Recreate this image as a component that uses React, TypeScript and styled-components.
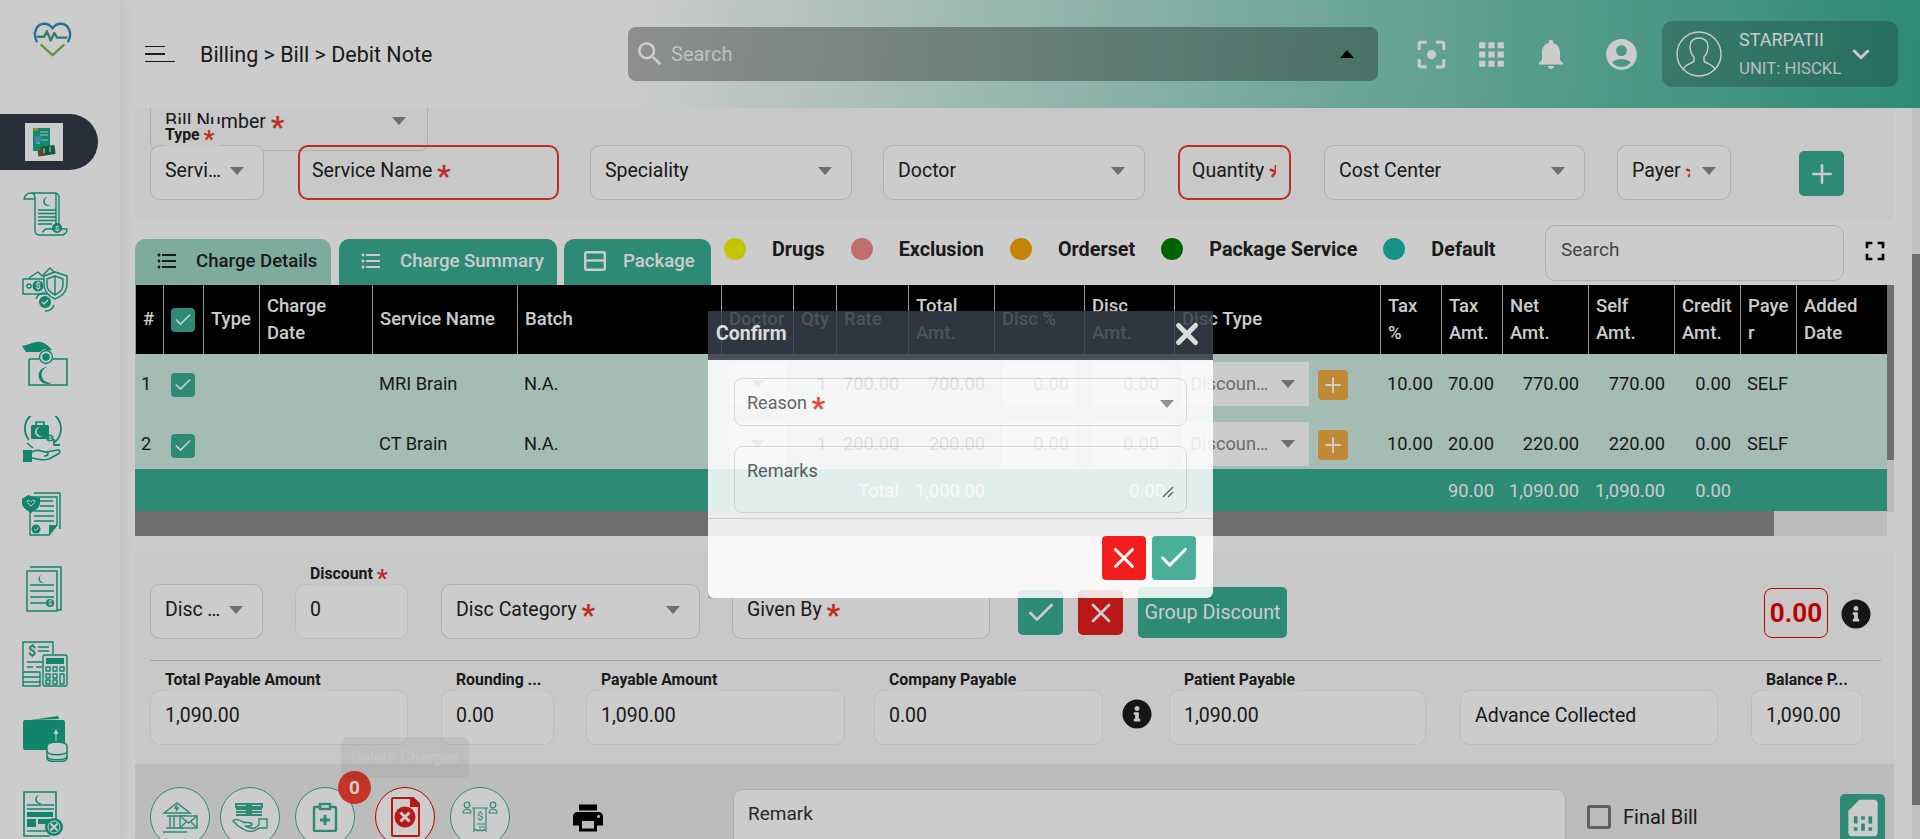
import React from 'react';
import styled, {createGlobalStyle} from 'styled-components';
import {Check, Plus, X} from 'lucide-react';
import {
  MdAccountCircle,
  MdApps,
  MdFilterCenterFocus,
  MdFormatListBulleted,
  MdFullscreen,
  MdKeyboardArrowDown,
  MdNotifications,
  MdPrint,
  MdSearch,
  MdSimCard
} from 'react-icons/md';
import {FaInfoCircle} from 'react-icons/fa';

const TEAL = '#39ae93';
const ICON = '#15a689';
const RED = '#e61e1e';

const GlobalStyle = createGlobalStyle`
  html, body {
    margin: 0;
    height: 100%;
    overflow: hidden;
    background: #fff;
    font-family: Roboto, "Noto Sans", sans-serif;
    color: #222;
  }
  * { box-sizing: border-box; }
`;

const Page = styled.div`
  display: flex;
  height: 839px;
  overflow: hidden;
`;

/* sidebar */
const Sidebar = styled.aside`
  width: 120px;
  flex: none;
  display: flex;
  flex-direction: column;
  background: #fff;
  box-shadow: 4px 0 12px rgba(0, 0, 0, 0.05);
  z-index: 1;
`;

const LogoBox = styled.div`
  height: 108px;
  flex: none;
  padding: 21px 0 0 33px;
`;

const ActivePill = styled.div`
  width: 98px;
  height: 56px;
  margin-top: 6px;
  flex: none;
  padding: 9px 0 0 25px;
  background: #333b49;
  border-radius: 0 28px 28px 0;
`;

const ActiveIconBox = styled.div`
  width: 38px;
  height: 38px;
  background: #fff;
  display: flex;
  align-items: center;
  justify-content: center;
`;

const NavList = styled.nav`
  margin-top: 6px;
  display: flex;
  flex-direction: column;
`;

const NavItem = styled.div`
  height: 75px;
  flex: none;
  display: flex;
  align-items: center;
  padding-left: 22px;
`;

/* top bar */
const Main = styled.div`
  flex: 1;
  min-width: 0;
  display: flex;
  flex-direction: column;
`;

const TopBar = styled.header`
  height: 108px;
  flex: none;
  display: flex;
  align-items: center;
  padding: 0 22px 0 25px;
  background: linear-gradient(93deg, #fff 0%, #fff 28%, #7fccb8 71%, ${TEAL} 100%);
`;

const Burger = styled.div`
  width: 30px;
  flex: none;
  display: flex;
  flex-direction: column;
  gap: 6px;
`;

const BurgerLine = styled.span<{$w: number}>`
  display: block;
  height: 1.5px;
  width: ${p => p.$w}px;
  background: #222;
`;

const Crumb = styled.div`
  width: 453px;
  flex: none;
  padding-left: 25px;
  font-size: 21.5px;
  color: #222;
`;

const TopSearch = styled.div`
  width: 750px;
  height: 54px;
  flex: none;
  display: flex;
  align-items: center;
  padding: 0 24px 0 6px;
  border-radius: 8px;
  background: rgba(0, 0, 0, 0.3);
  color: #fff;
  font-size: 20px;
  svg { color: #fff; }
`;

const TopSearchText = styled.span`
  flex: 1;
  margin-left: 5px;
  color: rgba(255, 255, 255, 0.85);
`;

const CaretUp = styled.span`
  width: 0;
  height: 0;
  border-left: 7px solid transparent;
  border-right: 7px solid transparent;
  border-bottom: 8px solid #000;
`;

const IconSlot = styled.div<{$ml?: number}>`
  width: 60px;
  height: 40px;
  flex: none;
  margin-left: ${p => p.$ml ?? 0}px;
  display: flex;
  align-items: center;
  justify-content: center;
  color: #fff;
`;

const UserBox = styled.div`
  width: 236px;
  height: 66px;
  flex: none;
  margin-left: 11px;
  display: flex;
  align-items: center;
  padding: 0 20px 0 14px;
  border-radius: 10px;
  background: rgba(0, 0, 0, 0.2);
  color: #fff;
`;

const UserText = styled.div`
  flex: 1;
  margin-left: 17px;
`;

const UserName = styled.div`
  font-size: 18px;
  line-height: 26px;
`;

const UserUnit = styled.div`
  font-size: 16.8px;
  line-height: 26px;
  margin-top: 2px;
  opacity: 0.85;
`;

/* content */
const Body = styled.div`
  flex: 1;
  min-height: 0;
  display: flex;
`;

const Content = styled.main`
  width: 1792px;
  flex: none;
  padding: 0 18px 0 15px;
  overflow: hidden;
`;

const PageScroll = styled.div`
  width: 8px;
  flex: none;
  display: flex;
  flex-direction: column;
  background: #f0f0f0;
`;

const PageScrollThumb = styled.div`
  height: 551px;
  margin-top: 146px;
  flex: none;
  background: #8a8a8a;
`;

const Card = styled.section`
  background: #fafafa;
  border-radius: 0 0 6px 6px;
  padding: 0 0 20px 15px;
`;

const BillPanel = styled.div`
  width: 278px;
  height: 43px;
  position: relative;
  display: flex;
  padding: 0 21px 0 14px;
  justify-content: space-between;
  align-items: flex-start;
  border: 1px solid #dcdcdc;
  border-top: 0;
  border-radius: 0 0 8px 8px;
  font-size: 19.5px;
  line-height: 27px;
`;

const FieldRow = styled.div<{$top?: number}>`
  display: flex;
  align-items: flex-start;
  margin-top: ${p => p.$top ?? 0}px;
`;

const Field = styled.div<{$w: number; $ml?: number; $error?: boolean; $soft?: boolean}>`
  position: relative;
  flex: none;
  width: ${p => p.$w}px;
  height: 55px;
  margin-left: ${p => p.$ml ?? 0}px;
  display: flex;
  padding: ${p => (p.$error ? '12px 0 0 12px' : '13px 0 0 14px')};
  justify-content: space-between;
  background: ${p => (p.$error ? 'transparent' : '#fff')};
  border: ${p =>
    p.$error ? '2px solid #e8392c' : `1px solid ${p.$soft ? '#ececec' : '#dcdcdc'}`};
  border-radius: 10px;
  font-size: 19.5px;
  line-height: 24px;
`;

const FieldText = styled.span<{$clip?: boolean; $max?: number}>`
  display: block;
  min-width: 0;
  white-space: nowrap;
  overflow: hidden;
  max-width: ${p => (p.$max ? `${p.$max}px` : 'none')};
  text-overflow: ${p => (p.$clip ? 'clip' : 'ellipsis')};
`;

const Star = styled.span`
  color: #ee3a30;
  font-weight: 700;
  font-size: 30px;
  line-height: 0;
  vertical-align: -9px;
`;

const FieldLabel = styled.label`
  position: absolute;
  left: 14px;
  top: -22px;
  height: 23px;
  padding-right: 7px;
  font-size: 15.8px;
  line-height: 22px;
  font-weight: 700;
  white-space: nowrap;
  background: #fafafa;
  border-radius: 0 0 3px 0;
  ${Star} {
    font-size: 24px;
    vertical-align: -7px;
  }
`;

const Caret = styled.span<{$mr?: number; $mt?: number}>`
  flex: none;
  width: 0;
  height: 0;
  margin: ${p => p.$mt ?? 8}px ${p => p.$mr ?? 19}px 0 0;
  border-left: 7px solid transparent;
  border-right: 7px solid transparent;
  border-top: 8px solid #8a8a8a;
`;

const SquareButton = styled.button<{$color: string; $ml?: number; $top?: number}>`
  flex: none;
  width: 45px;
  height: 45px;
  margin-left: ${p => p.$ml ?? 0}px;
  margin-top: ${p => p.$top ?? 0}px;
  padding: 0;
  border: 0;
  border-radius: 5px;
  background: ${p => p.$color};
  color: #fff;
  display: flex;
  align-items: center;
  justify-content: center;
`;

/* tabs and legend */
const TabBar = styled.div`
  display: flex;
  height: 60px;
  margin-top: 5px;
`;

const Tab = styled.div<{$w: number; $ml?: number; $active?: boolean}>`
  flex: none;
  width: ${p => p.$w}px;
  height: 46px;
  margin-left: ${p => p.$ml ?? 0}px;
  align-self: flex-end;
  display: flex;
  align-items: center;
  padding: 0 0 2px 20px;
  gap: 17px;
  border-radius: 10px 10px 0 0;
  background: ${p => (p.$active ? '#9dd7c7' : TEAL)};
  color: ${p => (p.$active ? '#222' : '#fff')};
  font-size: 18.6px;
  font-weight: 500;
`;

const Legend = styled.div`
  display: flex;
  align-items: center;
  height: 22px;
  margin: 13px 0 0 13px;
`;

const LegendDot = styled.span<{$color: string}>`
  width: 22px;
  height: 22px;
  flex: none;
  border-radius: 50%;
  background: ${p => p.$color};
`;

const LegendText = styled.span`
  margin: 0 26px 0 26px;
  font-size: 19.8px;
  font-weight: 700;
  white-space: nowrap;
`;

const SearchInput = styled.div`
  position: absolute;
  right: 0;
  top: 0;
  width: 299px;
  height: 56px;
  padding: 12px 0 0 15px;
  background: #fff;
  border: 1px solid #dcdcdc;
  border-radius: 10px;
  font-size: 19px;
  line-height: 24px;
  color: #555;
`;

const SearchSlot = styled.div`
  position: relative;
  flex: 1;
  min-width: 0;
`;

const ExpandIcon = styled.div`
  width: 50px;
  flex: none;
  padding: 10px 0 0 15px;
  color: #000;
`;

/* table */
const TableArea = styled.div`
  display: flex;
`;

const TableCol = styled.div`
  width: 1752px;
  flex: none;
`;

const Grid = styled.table`
  width: 1752px;
  table-layout: fixed;
  border-collapse: separate;
  border-spacing: 0;
  font-size: 18.3px;
`;

const Th = styled.th`
  height: 69px;
  padding: 0 0 0 7px;
  background: #000;
  color: #fff;
  text-align: left;
  font-size: 18.5px;
  font-weight: 500;
  line-height: 27px;
  white-space: pre-line;
  border-right: 1px solid #bbb;
  &:first-child { border-left: 1px solid #bbb; }
  &:last-child { border-right: 0; }
`;

const Td = styled.td<{$h: number; $right?: boolean}>`
  height: ${p => p.$h}px;
  padding: 18px 10px 0 6px;
  vertical-align: top;
  background: #cfebe1;
  line-height: 24px;
  white-space: nowrap;
  text-align: ${p => (p.$right ? 'right' : 'left')};
  color: #1e1e1e;
`;

const FootTd = styled.td<{$right?: boolean}>`
  height: 42px;
  padding: 0 10px 0 6px;
  background: ${TEAL};
  color: #fff;
  text-align: ${p => (p.$right ? 'right' : 'left')};
  white-space: nowrap;
`;

const BoxTd = styled.td<{$h: number}>`
  height: ${p => p.$h}px;
  padding: 8px 8px 0 7px;
  vertical-align: top;
  background: #cfebe1;
`;

const CellBox = styled.div<{$right?: boolean; $center?: boolean}>`
  height: 44px;
  padding: 10px 8px 0;
  background: #fff;
  color: #777;
  line-height: 24px;
  text-align: ${p => (p.$right ? 'right' : 'left')};
  display: ${p => (p.$center ? 'flex' : 'block')};
  justify-content: center;
`;

const DiscCell = styled.div`
  display: flex;
  gap: 9px;
`;

const DiscSelect = styled.div`
  width: 127px;
  height: 44px;
  flex: none;
  display: flex;
  justify-content: space-between;
  padding: 10px 0 0 8px;
  background: #fff;
  color: #888;
  line-height: 24px;
  white-space: nowrap;
`;

const DiscText = styled.span`
  max-width: 82px;
  overflow: hidden;
  text-overflow: ellipsis;
`;

const PlusButton = styled.div`
  width: 30px;
  height: 30px;
  flex: none;
  margin-top: 8px;
  border-radius: 4px;
  background: #f0ac40;
  color: #fff;
  display: flex;
  align-items: center;
  justify-content: center;
`;

const CheckBox = styled.span<{$top?: number}>`
  width: 24px;
  height: 24px;
  margin-top: ${p => p.$top ?? 0}px;
  display: flex;
  align-items: center;
  justify-content: center;
  border-radius: 4px;
  background: ${TEAL};
  color: #fff;
`;

const HScroll = styled.div`
  height: 25px;
  background: #ececec;
`;

const HScrollThumb = styled.div`
  width: 1639px;
  height: 25px;
  background: #8a8a8a;
`;

const VScroll = styled.div`
  width: 7px;
  height: 227px;
  flex: none;
  background: #e8e8e8;
`;

const VScrollThumb = styled.div`
  height: 175px;
  background: #8a8a8a;
`;

/* discount and totals */
const DiscountCard = styled(Card)`
  margin-top: 15px;
  padding-top: 33px;
  padding-bottom: 19px;
`;

const GroupButton = styled.div`
  width: 149px;
  height: 51px;
  flex: none;
  margin: 3px 0 0 15px;
  border-radius: 5px;
  background: ${TEAL};
  color: #fff;
  font-size: 19.8px;
  display: flex;
  align-items: center;
  justify-content: center;
`;

const BalanceBox = styled.div`
  width: 64px;
  height: 50px;
  flex: none;
  margin: 4px 0 0 auto;
  border: 1px solid #ee0000;
  border-radius: 8px;
  color: #ee0000;
  font-size: 26px;
  font-weight: 700;
  display: flex;
  align-items: center;
  justify-content: center;
`;

const InfoSlot = styled.div<{$ml: number; $mr?: number; $top: number}>`
  flex: none;
  width: 30px;
  height: 30px;
  margin: ${p => p.$top}px ${p => p.$mr ?? 0}px 0 ${p => p.$ml}px;
  color: #1c1c1c;
`;

const Divider = styled.hr`
  height: 1px;
  width: 1731px;
  margin: 21px 0 29px;
  border: 0;
  background: #cfcfcf;
`;

/* bottom actions */
const ActionBar = styled.div`
  display: flex;
  align-items: flex-start;
  height: 75px;
  padding: 23px 0 0 15px;
  background: #ececec;
`;

const RoundAction = styled.div<{$ml?: number; $danger?: boolean}>`
  position: relative;
  flex: none;
  width: 60px;
  height: 60px;
  margin-left: ${p => p.$ml ?? 0}px;
  border: 1px solid ${p => (p.$danger ? '#e80000' : TEAL)};
  border-radius: 50%;
  background: #fff;
  display: flex;
  align-items: center;
  justify-content: center;
`;

const Badge = styled.span`
  position: absolute;
  left: 42px;
  top: -17px;
  width: 33px;
  height: 33px;
  border-radius: 50%;
  background: #f5432f;
  color: #fff;
  font-size: 19px;
  font-weight: 700;
  display: flex;
  align-items: center;
  justify-content: center;
`;

const Tip = styled.span`
  position: absolute;
  left: -35px;
  top: -51px;
  width: 128px;
  height: 41px;
  border-radius: 6px;
  background: rgba(0, 0, 0, 0.05);
  color: rgba(255, 255, 255, 0.55);
  font-size: 16px;
  display: flex;
  align-items: center;
  justify-content: center;
  white-space: nowrap;
`;

const PrintSlot = styled.div`
  width: 36px;
  height: 36px;
  flex: none;
  margin: 13px 0 0 60px;
  color: #000;
`;

const RemarkBox = styled.div`
  width: 833px;
  height: 60px;
  flex: none;
  margin: 2px 0 0 127px;
  padding: 12px 0 0 14px;
  background: #fff;
  border: 1px solid #dcdcdc;
  border-radius: 10px 10px 0 0;
  font-size: 19px;
  line-height: 24px;
  color: #333;
`;

const FinalBill = styled.div`
  display: flex;
  align-items: center;
  gap: 12px;
  flex: none;
  margin: 18px 0 0 21px;
  font-size: 20px;
  line-height: 24px;
`;

const EmptyCheck = styled.span`
  width: 24px;
  height: 24px;
  border: 3px solid #777;
  border-radius: 3px;
`;

const SimButton = styled.div`
  width: 45px;
  height: 50px;
  flex: none;
  margin: 7px 9px 0 auto;
  border-radius: 5px 5px 0 0;
  background: ${TEAL};
  color: #fff;
  display: flex;
  justify-content: center;
  padding-top: 2px;
`;

/* dialog */
const Backdrop = styled.div`
  position: fixed;
  inset: 0;
  z-index: 10;
  background: rgba(0, 0, 0, 0.2);
`;

const Dialog = styled.div`
  position: fixed;
  z-index: 11;
  left: 708px;
  top: 311px;
  width: 505px;
  height: 287px;
  display: flex;
  flex-direction: column;
  opacity: 0.86;
  background: #fff;
  border-radius: 0 0 6px 6px;
  overflow: hidden;
`;

const DialogHead = styled.div`
  height: 49px;
  flex: none;
  display: flex;
  align-items: center;
  justify-content: space-between;
  padding: 0 9px 4px 8px;
  background: #373e4c;
  color: #fff;
  font-size: 19.5px;
  font-weight: 700;
`;

const DialogBody = styled.div`
  height: 159px;
  flex: none;
  padding: 18px 26px 0;
  display: flex;
  flex-direction: column;
  gap: 20px;
  border-bottom: 1px solid #dcdcdc;
`;

const DialogField = styled.div<{$h: number}>`
  position: relative;
  height: ${p => p.$h}px;
  flex: none;
  display: flex;
  justify-content: space-between;
  padding: 12px 12px 0 12px;
  border: 1px solid #dedede;
  border-radius: 8px;
  font-size: 18px;
  line-height: 24px;
  color: #555;
`;

const ResizeGrip = styled.svg`
  position: absolute;
  right: 12px;
  bottom: 14px;
`;

const DialogFoot = styled.div`
  flex: 1;
  display: flex;
  justify-content: flex-end;
  gap: 6px;
  padding: 17px 17px 0 0;
`;

const DialogButton = styled.div<{$color: string}>`
  width: 44px;
  height: 44px;
  border-radius: 4px;
  background: ${p => p.$color};
  color: #fff;
  display: flex;
  align-items: center;
  justify-content: center;
`;

/* drawings */
const Crescent = ({x, y, s = 1}: {x: number; y: number; s?: number}) => (
  <path
    transform={`translate(${x} ${y}) scale(${s})`}
    d="M3 0a5 5 0 1 0 3 9a4.4 4.4 0 0 1-3-9z"
    fill={ICON}
    stroke="none"
  />
);

const Coin = ({x, y, r = 4.5}: {x: number; y: number; r?: number}) => (
  <>
    <circle cx={x} cy={y} r={r} fill={ICON} stroke="none" />
    <text x={x} y={y + r * 0.6} fontSize={r * 1.6} fontWeight={700} textAnchor="middle" fill="#fff" stroke="none">
      $
    </text>
  </>
);

const Ico = ({children}: {children: React.ReactNode}) => (
  <svg width="46" height="46" viewBox="0 0 46 46" fill="none" stroke={ICON} strokeWidth={1.4} strokeLinejoin="round">
    {children}
  </svg>
);

const Logo = () => (
  <svg width="39" height="37" viewBox="0 0 42 40" fill="none" strokeWidth="2.6" strokeLinecap="round" strokeLinejoin="round">
    <path d="M4 22C-1 13 4 3 12 3c4 0 7 2 9 5 2-3 5-5 9-5 8 0 13 10 8 19" stroke="#2d8fb3" />
    <path d="M5 17h7l3-6 4 10 4-8 3 5h10" stroke="#3f9a86" />
    <path d="M9 26l12 11 12-11" stroke="#79bb55" />
  </svg>
);

const ActiveIcon = () => (
  <svg width="24" height="30" viewBox="0 0 24 30">
    <rect x="1" y="1" width="17" height="23" rx="1" fill="#14a98b" />
    <rect x="2" y="1" width="4" height="3" fill="#e49a3a" />
    <path d="M8 5h8M8 8h8M4 16h4M9 13h7" stroke="#c8f0e5" strokeWidth="1" />
    <circle cx="6" cy="12" r="3.2" fill="#55a9d8" />
    <rect x="9" y="19" width="14" height="9" fill="#1a6c4e" transform="rotate(-8 16 23)" />
    <rect x="6" y="23" width="7" height="6" fill="#7a5a2e" transform="rotate(-8 9 26)" />
    <path d="M12 21v5M18 20v5" stroke="#c8f0e5" strokeWidth="1.2" />
  </svg>
);

const ScrollIcon = () => (
  <Ico>
    <path d="M9 2h24a4 4 0 0 1 4 4v31M9 2c3 0 4 2 4 5v33c0 2 2 4 4 4h24c2-1 4-3 4-6H24c-2 0-2 3-4 3" />
    <path d="M9 2c-3 0-6 2-7 6h11" />
    <path d="M33 2a3 3 0 0 1 1 3v31" />
    <Crescent x={23} y={6} s={0.9} />
    <path d="M16 19h18M16 22.5h18M16 26h18M16 29.5h18M16 33h14" strokeWidth="1.6" />
    <Coin x={35} y={37} r={5} />
  </Ico>
);

const ShieldIcon = () => (
  <Ico>
    <path d="M7 12l9-6 4 4 8-8 8 8" />
    <rect x="1" y="13" width="24" height="15" />
    <circle cx="7" cy="20" r="2" />
    <Coin x={16} y={20} r={5.5} />
    <path d="M33 6l12 4v8c0 8-6 13-12 15-5-2-11-7-11-15v-8z" fill="#fff" />
    <path d="M33 10l8 3v6c0 5-4 8-8 10-4-2-8-5-8-10v-6z" />
    <path d="M33 10v19" />
    <circle cx="23" cy="36" r="6" fill={ICON} stroke="none" />
    <path d="M20 36l2 2 4-4" stroke="#fff" />
    <path d="M14 33a9 9 0 0 1 9-6M32 39a9 9 0 0 1-9 6" />
  </Ico>
);

const HandCoinIcon = () => (
  <Ico>
    <path d="M0 5c7-1 13-5 19-4 4 1 8 4 11 8-3 1-5 0-8-1l-4 3H4z" fill={ICON} stroke="none" />
    <circle cx="24" cy="16" r="6.5" fill="#fff" />
    <circle cx="24" cy="16" r="3.8" fill={ICON} stroke="none" />
    <path d="M7 18h10M31 18h14v26H7V18" strokeWidth="1.6" />
    <Crescent x={20} y={26} s={1.7} />
  </Ico>
);

const HandCaseIcon = () => (
  <Ico>
    <path d="M7 24A18 18 0 1 1 33 26" strokeWidth="1.8" />
    <rect x="9" y="9" width="18" height="14" rx="1.5" fill={ICON} stroke="none" />
    <path d="M14 9V6h8v3" strokeWidth="1.6" />
    <path d="M18 11a5 5 0 1 0 3 9a4.4 4.4 0 0 1-3-9z" fill="#fff" stroke="none" />
    <Coin x={28} y={22} r={3.5} />
    <path d="M32 23v6h6" strokeWidth="1.8" />
    <rect x="1" y="34" width="9" height="12" fill={ICON} stroke="none" />
    <path d="M10 36c6-4 10 0 14 0 3 0 3 4-2 4M24 36l12-2c3 0 2 3 0 4l-9 5c-6 2-12 0-17-1" strokeWidth="1.6" />
    <path d="M5 27l6 5" strokeWidth="1.6" />
  </Ico>
);

const DocShieldIcon = () => (
  <Ico>
    <path d="M12 2h26v36" />
    <path d="M8 6h27v28l-8 10H8z" />
    <path d="M27 44V34h8z" fill={ICON} stroke="none" />
    <path d="M16 10h15M18 15h14M12 20h20M12 25h20M12 30h20" strokeWidth="1.6" />
    <path d="M0 8l6-4 6 2 6 1v5c0 5-6 8-9 10-3-2-9-5-9-10z" fill={ICON} stroke="none" />
    <path d="M5 10c2-2 3 0 4 1 1-1 3-3 4-1 0 2-3 4-4 5-1-1-4-3-4-5z" stroke="#fff" strokeWidth="1" />
    <circle cx="14" cy="38" r="4.5" fill={ICON} stroke="none" />
    <path d="M12 38l2 1.5 2.5-3" stroke="#fff" strokeWidth="1" />
  </Ico>
);

const DocIcon = () => (
  <Ico>
    <path d="M8 1h31v43h-4" strokeWidth="1.5" />
    <rect x="5" y="5" width="30" height="40" strokeWidth="1.5" />
    <Crescent x={18} y={9} s={0.8} />
    <path d="M8 19h24M8 25h24M8 31h24M8 37h16" strokeWidth="1.6" />
    <Coin x={28} y={37} r={4} />
  </Ico>
);

const CalcIcon = () => (
  <Ico>
    <path d="M1 30V1h30v12" />
    <text x="6" y="15" fontSize="14" fontWeight="700" fill={ICON} stroke="none">$</text>
    <path d="M16 6h11M16 10h11M5 21h16M5 26h6M14 26h6" />
    <path d="M1 31h17v14H1zM1 36h17M1 41h17" />
    <rect x="21" y="14" width="24" height="31" rx="2" />
    <rect x="24" y="17" width="18" height="6" fill={ICON} stroke="none" />
    <path d="M24 26h4v4h-4zM31 26h4v4h-4zM38 26h4v4h-4zM24 33h4v4h-4zM31 33h4v4h-4zM24 39h4v4h-4zM31 39h4v4h-4zM38 33h4v10h-4z" />
  </Ico>
);

const WalletIcon = () => (
  <Ico>
    <path d="M8 4l28-4 1 3z" fill={ICON} stroke="none" />
    <rect x="1" y="4" width="42" height="30" rx="2" fill={ICON} stroke="none" />
    <path d="M34 13l-2.5 5h2v7h1v-7h2z" fill="#fff" stroke="none" />
    <ellipse cx="35" cy="30" rx="10" ry="4" fill="#fff" />
    <path d="M25 30v12c0 5 20 5 20 0V30" fill="#fff" />
    <path d="M25 35c0 5 20 5 20 0M25 40c0 5 20 5 20 0" />
  </Ico>
);

const DocXIcon = () => (
  <Ico>
    <path d="M34 32V1H2v44h26" strokeWidth="1.6" />
    <Crescent x={15} y={4} s={0.9} />
    <path d="M5 14h27M5 18h27" strokeWidth="1.6" />
    <path d="M5 21h26v5H5zM5 28h9v8H5zM16 28h15v5H16z" fill={ICON} stroke="none" />
    <path d="M5 40h20" />
    <circle cx="32" cy="36" r="9" fill={ICON} stroke="none" />
    <circle cx="32" cy="36" r="6" stroke="#fff" strokeWidth="1" />
    <path d="M28.5 32.5l7 7M35.5 32.5l-7 7" stroke="#fff" strokeWidth="2" />
  </Ico>
);

const BankIcon = () => (
  <svg width="36" height="34" viewBox="0 0 36 34" fill="none" stroke={TEAL} strokeWidth="1.4">
    <path d="M2 13L15 3l13 10zM5 16h20M8 16v12M12 16v12M19 16v12M23 16v12M4 28h18M1 32h24" />
    <path d="M15 5l-2 3h3l-2 3" />
    <rect x="18" y="16" width="17" height="12" fill="#fff" />
    <path d="M18 16l8.5 7 8.5-7M18 28l6-6M35 28l-6-6" />
  </svg>
);

const CashHandIcon = () => (
  <svg width="36" height="30" viewBox="0 0 36 30" fill="none" stroke={TEAL} strokeWidth="1.4">
    <path d="M4 2h26v3H4zM4 7h26M4 10h26M4 13h26" strokeWidth="2" />
    <rect x="14" y="1" width="6" height="13" fill={TEAL} stroke="none" />
    <path d="M1 19c3-3 7-1 10 1 2 1 8 0 9 2s-4 2-7 2c5 2 8 3 10 2l4-3v-6h8v9h-8c-6 5-11 4-16 1-4-2-7-4-10-8z" />
  </svg>
);

const ClipIcon = () => (
  <svg width="26" height="30" viewBox="0 0 26 30" fill="none" stroke={TEAL} strokeWidth="2.4">
    <rect x="2" y="5" width="22" height="24" rx="1" />
    <rect x="8" y="2" width="10" height="5" fill="#fff" />
    <path d="M13 13v10M8 18h10" strokeWidth="3" />
  </svg>
);

const DeleteDocIcon = () => (
  <svg width="30" height="40" viewBox="0 0 30 40" fill="none" stroke="#e61e1e" strokeWidth="2">
    <path d="M3 1h20l6 6v31a1 1 0 0 1-1 1H3a1 1 0 0 1-1-1V2a1 1 0 0 1 1-1z" />
    <path d="M21 1h2l6 6v2h-8z" fill="#e61e1e" />
    <circle cx="15" cy="20" r="10.5" fill="#e61e1e" stroke="none" />
    <path d="M10.5 15.5l9 9M19.5 15.5l-9 9" stroke="#fff" strokeWidth="3" />
  </svg>
);

const ReceiptPeopleIcon = () => (
  <svg width="36" height="32" viewBox="0 0 36 32" fill="none" stroke={TEAL} strokeWidth="1.2">
    <circle cx="5" cy="4" r="2.8" />
    <path d="M1 12c0-5 8-5 8 0z" />
    <circle cx="31" cy="4" r="2.8" />
    <path d="M27 12c0-5 8-5 8 0z" />
    <path d="M10 7h16M12 7v23l2-1.5 2 1.5 2-1.5 2 1.5 2-1.5 2 1.5V7" />
    <text x="15" y="19" fontSize="11" fill={TEAL} stroke="none">$</text>
    <path d="M15 23h8M17 26h6" />
  </svg>
);

const Avatar = () => (
  <svg width="46" height="46" viewBox="0 0 46 46" fill="none" stroke="#fff" strokeWidth="1.4">
    <circle cx="23" cy="23" r="22" />
    <path d="M7 39c1-6 9-6 11-9v-4c-3-3-4-7-4-11 0-5 4-8 9-8s9 3 9 8c0 4-1 8-4 11v4c2 3 10 3 11 9" />
  </svg>
);

const PackageIcon = () => (
  <svg width="22" height="20" viewBox="0 0 22 20" fill="none" stroke="#fff" strokeWidth="2.4">
    <rect x="1.2" y="1.2" width="19.6" height="17.6" rx="1.5" />
    <path d="M1 9.5h20" />
  </svg>
);

const COLS = [29, 40, 56, 113, 145, 204, 72, 43, 72, 86, 90, 90, 206, 61, 61, 86, 86, 66, 56, 90];

const HEADS = [
  '#', '', 'Type', 'Charge\nDate', 'Service Name', 'Batch', 'Doctor', 'Qty', 'Rate', 'Total\nAmt.',
  'Disc %', 'Disc\nAmt.', 'Disc Type', 'Tax\n%', 'Tax\nAmt.', 'Net\nAmt.', 'Self\nAmt.', 'Credit\nAmt.',
  'Paye\nr', 'Added\nDate'
];

const ROWS = [
  {no: 1, name: 'MRI Brain', rate: '700.00', tax: '70.00', net: '770.00', h: 60, checkTop: 11},
  {no: 2, name: 'CT Brain', rate: '200.00', tax: '20.00', net: '220.00', h: 55, checkTop: 12}
];

const NAV_ICONS = [
  ScrollIcon, ShieldIcon, HandCoinIcon, HandCaseIcon, DocShieldIcon, DocIcon, CalcIcon, WalletIcon, DocXIcon
];

const LEGEND = [
  {color: '#f5f500', label: 'Drugs'},
  {color: '#f08a8a', label: 'Exclusion'},
  {color: '#f5a50a', label: 'Orderset'},
  {color: '#007c00', label: 'Package Service'},
  {color: '#1bb8ac', label: 'Default'}
];

const Required = () => <Star>*</Star>;

const App = () => (
  <>
    <GlobalStyle />
    <Page>
      <Sidebar>
        <LogoBox>
          <Logo />
        </LogoBox>
        <ActivePill>
          <ActiveIconBox>
            <ActiveIcon />
          </ActiveIconBox>
        </ActivePill>
        <NavList>
          {NAV_ICONS.map((Icon, i) => (
            <NavItem key={i}>
              <Icon />
            </NavItem>
          ))}
        </NavList>
      </Sidebar>
      <Main>
        <TopBar>
          <Burger>
            <BurgerLine $w={20} />
            <BurgerLine $w={20} />
            <BurgerLine $w={30} />
          </Burger>
          <Crumb>Billing &gt; Bill &gt; Debit Note</Crumb>
          <TopSearch>
            <MdSearch size={32} />
            <TopSearchText>Search</TopSearchText>
            <CaretUp />
          </TopSearch>
          <IconSlot $ml={23}>
            <MdFilterCenterFocus size={37} />
          </IconSlot>
          <IconSlot>
            <MdApps size={37} />
          </IconSlot>
          <IconSlot>
            <MdNotifications size={36} />
          </IconSlot>
          <IconSlot $ml={10}>
            <MdAccountCircle size={37} />
          </IconSlot>
          <UserBox>
            <Avatar />
            <UserText>
              <UserName>STARPATII</UserName>
              <UserUnit>UNIT: HISCKL</UserUnit>
            </UserText>
            <MdKeyboardArrowDown size={34} />
          </UserBox>
        </TopBar>
        <Body>
          <Content>
            <Card>
              <BillPanel>
                <span>
                  Bill Number <Required />
                </span>
                <Caret $mr={0} $mt={9} />
              </BillPanel>
              <FieldRow $top={-6}>
                <Field $w={114}>
                  <FieldLabel>
                    Type <Required />
                  </FieldLabel>
                  <FieldText $max={56}>Service Type</FieldText>
                  <Caret />
                </Field>
                <Field $w={261} $ml={34} $error>
                  <FieldText>
                    Service Name <Required />
                  </FieldText>
                </Field>
                <Field $w={262} $ml={31}>
                  <FieldText>Speciality</FieldText>
                  <Caret />
                </Field>
                <Field $w={262} $ml={31}>
                  <FieldText>Doctor</FieldText>
                  <Caret />
                </Field>
                <Field $w={113} $ml={33} $error>
                  <FieldText $clip $max={84}>
                    Quantity <Required />
                  </FieldText>
                </Field>
                <Field $w={261} $ml={33}>
                  <FieldText>Cost Center</FieldText>
                  <Caret />
                </Field>
                <Field $w={114} $ml={32}>
                  <FieldText $clip $max={58}>
                    Payer <Required />
                  </FieldText>
                  <Caret $mr={14} />
                </Field>
                <SquareButton $color={TEAL} $ml={68} $top={6}>
                  <Plus size={30} strokeWidth={2} />
                </SquareButton>
              </FieldRow>
            </Card>

            <TabBar>
              <Tab $w={196} $active>
                <MdFormatListBulleted size={24} />
                Charge Details
              </Tab>
              <Tab $w={218} $ml={8}>
                <MdFormatListBulleted size={24} />
                Charge Summary
              </Tab>
              <Tab $w={147} $ml={7}>
                <PackageIcon />
                Package
              </Tab>
              <Legend>
                {LEGEND.map(item => (
                  <React.Fragment key={item.label}>
                    <LegendDot $color={item.color} />
                    <LegendText>{item.label}</LegendText>
                  </React.Fragment>
                ))}
              </Legend>
              <SearchSlot>
                <SearchInput>Search</SearchInput>
              </SearchSlot>
              <ExpandIcon>
                <MdFullscreen size={32} />
              </ExpandIcon>
            </TabBar>

            <TableArea>
              <TableCol>
                <Grid>
                  <colgroup>
                    {COLS.map((w, i) => (
                      <col key={i} width={w} />
                    ))}
                  </colgroup>
                  <thead>
                    <tr>
                      {HEADS.map((h, i) => (
                        <Th key={i}>
                          {i === 1 ? (
                            <CheckBox>
                              <Check size={20} strokeWidth={2} />
                            </CheckBox>
                          ) : (
                            h
                          )}
                        </Th>
                      ))}
                    </tr>
                  </thead>
                  <tbody>
                    {ROWS.map(r => (
                      <tr key={r.no}>
                        <Td $h={r.h}>{r.no}</Td>
                        <BoxTd $h={r.h}>
                          <CheckBox $top={r.checkTop}>
                            <Check size={20} strokeWidth={2} />
                          </CheckBox>
                        </BoxTd>
                        <Td $h={r.h} />
                        <Td $h={r.h} />
                        <Td $h={r.h}>{r.name}</Td>
                        <Td $h={r.h}>N.A.</Td>
                        <BoxTd $h={r.h}>
                          <CellBox $center>
                            <Caret $mr={0} />
                          </CellBox>
                        </BoxTd>
                        <Td $h={r.h} $right>1</Td>
                        <Td $h={r.h} $right>{r.rate}</Td>
                        <Td $h={r.h} $right>{r.rate}</Td>
                        <BoxTd $h={r.h}>
                          <CellBox $right>0.00</CellBox>
                        </BoxTd>
                        <BoxTd $h={r.h}>
                          <CellBox $right>0.00</CellBox>
                        </BoxTd>
                        <BoxTd $h={r.h}>
                          <DiscCell>
                            <DiscSelect>
                              <DiscText>Discount Type</DiscText>
                              <Caret $mr={14} />
                            </DiscSelect>
                            <PlusButton>
                              <Plus size={24} strokeWidth={2} />
                            </PlusButton>
                          </DiscCell>
                        </BoxTd>
                        <Td $h={r.h} $right>10.00</Td>
                        <Td $h={r.h} $right>{r.tax}</Td>
                        <Td $h={r.h} $right>{r.net}</Td>
                        <Td $h={r.h} $right>{r.net}</Td>
                        <Td $h={r.h} $right>0.00</Td>
                        <Td $h={r.h}>SELF</Td>
                        <Td $h={r.h} />
                      </tr>
                    ))}
                    <tr>
                      <FootTd colSpan={8} />
                      <FootTd $right>Total</FootTd>
                      <FootTd $right>1,000.00</FootTd>
                      <FootTd />
                      <FootTd $right>0.00</FootTd>
                      <FootTd />
                      <FootTd />
                      <FootTd $right>90.00</FootTd>
                      <FootTd $right>1,090.00</FootTd>
                      <FootTd $right>1,090.00</FootTd>
                      <FootTd $right>0.00</FootTd>
                      <FootTd />
                      <FootTd />
                    </tr>
                  </tbody>
                </Grid>
                <HScroll>
                  <HScrollThumb />
                </HScroll>
              </TableCol>
              <VScroll>
                <VScrollThumb />
              </VScroll>
            </TableArea>

            <DiscountCard>
              <FieldRow>
                <Field $w={113}>
                  <FieldText $max={56}>Disc Type</FieldText>
                  <Caret />
                </Field>
                <Field $w={113} $ml={32} $soft>
                  <FieldLabel>
                    Discount <Required />
                  </FieldLabel>
                  <FieldText>0</FieldText>
                </Field>
                <Field $w={259} $ml={33}>
                  <FieldText>
                    Disc Category <Required />
                  </FieldText>
                  <Caret />
                </Field>
                <Field $w={258} $ml={32}>
                  <FieldText>
                    Given By <Required />
                  </FieldText>
                </Field>
                <SquareButton $color={TEAL} $ml={28} $top={6}>
                  <Check size={32} strokeWidth={2} />
                </SquareButton>
                <SquareButton $color={RED} $ml={15} $top={6}>
                  <X size={32} strokeWidth={2} />
                </SquareButton>
                <GroupButton>Group Discount</GroupButton>
                <BalanceBox>0.00</BalanceBox>
                <InfoSlot $ml={13} $mr={23} $top={15}>
                  <FaInfoCircle size={30} />
                </InfoSlot>
              </FieldRow>
              <Divider />
              <FieldRow>
                <Field $w={258} $soft>
                  <FieldLabel>Total Payable Amount</FieldLabel>
                  <FieldText>1,090.00</FieldText>
                </Field>
                <Field $w={113} $ml={33} $soft>
                  <FieldLabel>Rounding ...</FieldLabel>
                  <FieldText>0.00</FieldText>
                </Field>
                <Field $w={259} $ml={32} $soft>
                  <FieldLabel>Payable Amount</FieldLabel>
                  <FieldText>1,090.00</FieldText>
                </Field>
                <Field $w={229} $ml={29} $soft>
                  <FieldLabel>Company Payable</FieldLabel>
                  <FieldText>0.00</FieldText>
                </Field>
                <InfoSlot $ml={19} $mr={17} $top={9}>
                  <FaInfoCircle size={30} />
                </InfoSlot>
                <Field $w={257} $soft>
                  <FieldLabel>Patient Payable</FieldLabel>
                  <FieldText>1,090.00</FieldText>
                </Field>
                <Field $w={258} $ml={34} $soft>
                  <FieldText>Advance Collected</FieldText>
                </Field>
                <Field $w={112} $ml={33} $soft>
                  <FieldLabel>Balance P...</FieldLabel>
                  <FieldText>1,090.00</FieldText>
                </Field>
              </FieldRow>
            </DiscountCard>

            <ActionBar>
              <RoundAction>
                <BankIcon />
              </RoundAction>
              <RoundAction $ml={10}>
                <CashHandIcon />
              </RoundAction>
              <RoundAction $ml={15}>
                <ClipIcon />
                <Badge>0</Badge>
              </RoundAction>
              <RoundAction $ml={20} $danger>
                <DeleteDocIcon />
                <Tip>Delete Charges</Tip>
              </RoundAction>
              <RoundAction $ml={15}>
                <ReceiptPeopleIcon />
              </RoundAction>
              <PrintSlot>
                <MdPrint size={36} />
              </PrintSlot>
              <RemarkBox>Remark</RemarkBox>
              <FinalBill>
                <EmptyCheck />
                Final Bill
              </FinalBill>
              <SimButton>
                <MdSimCard size={44} />
              </SimButton>
            </ActionBar>
          </Content>
          <PageScroll>
            <PageScrollThumb />
          </PageScroll>
        </Body>
      </Main>
    </Page>

    <Backdrop />
    <Dialog>
      <DialogHead>
        Confirm
        <X size={34} strokeWidth={3.5} />
      </DialogHead>
      <DialogBody>
        <DialogField $h={48}>
          <span>
            Reason <Required />
          </span>
          <Caret $mr={0} $mt={9} />
        </DialogField>
        <DialogField $h={67}>
          <span>Remarks</span>
          <ResizeGrip width="12" height="12" viewBox="0 0 12 12" stroke="#555" strokeWidth="1.2">
            <path d="M1 11L11 1M6 11l5-5" />
          </ResizeGrip>
        </DialogField>
      </DialogBody>
      <DialogFoot>
        <DialogButton $color="#fa0000">
          <X size={34} strokeWidth={2.2} />
        </DialogButton>
        <DialogButton $color="#35ab92">
          <Check size={34} strokeWidth={2.2} />
        </DialogButton>
      </DialogFoot>
    </Dialog>
  </>
);

export default App;
